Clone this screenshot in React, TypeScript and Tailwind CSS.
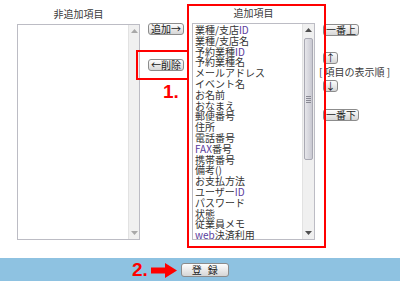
const items = [
  "業種/支店ID",
  "業種/支店名",
  "予約業種ID",
  "予約業種名",
  "メールアドレス",
  "イベント名",
  "お名前",
  "おなまえ",
  "郵便番号",
  "住所",
  "電話番号",
  "FAX番号",
  "携帯番号",
  "備考()",
  "お支払方法",
  "ユーザーID",
  "パスワード",
  "状態",
  "従業員メモ",
  "web決済利用",
];

// latin letters show up purple-ish in the original listbox
function Item({ label }: { label: string }) {
  const parts = label.split(/([A-Za-z]+)/);
  return (
    <div className="h-[10.8px] leading-[10.8px] whitespace-nowrap">
      {parts.map((p, i) =>
        /^[A-Za-z]+$/.test(p) ? (
          <span key={i} className="text-[#5a3c9c]">
            {p}
          </span>
        ) : (
          <span key={i}>{p}</span>
        )
      )}
    </div>
  );
}

function Btn({ children, className = "" }: { children: React.ReactNode; className?: string }) {
  return (
    <button
      className={`flex items-center justify-center rounded-[3px] border border-[#8c8c8c] bg-linear-to-b from-[#fefefe] to-[#d6d6d6] text-[10px] leading-none text-[#222] ${className}`}
    >
      {children}
    </button>
  );
}

function Arrow({ up, dim }: { up?: boolean; dim?: boolean }) {
  return (
    <svg width="7" height="4" viewBox="0 0 7 4">
      <path d={up ? "M0 4 L3.5 0 L7 4 Z" : "M0 0 L3.5 4 L7 0 Z"} fill={dim ? "#a8a8a8" : "#505050"} />
    </svg>
  );
}

export default function App() {
  return (
    <div className="w-[400px] h-[281px] bg-white font-['Noto_Sans_CJK_JP','Noto_Sans',sans-serif] text-[#3a3a3a] overflow-hidden">
      <section className="relative flex h-[258px] pl-[17px]">
        <div className="flex w-[123px] flex-col">
          <p className="h-[24px] pt-[8px] text-center text-[10px] leading-[12px]">非追加項目</p>
          <div className="flex h-[216px] border border-[#bcbcc4]">
            <div className="flex-1 bg-white" />
            <div className="flex w-[11px] flex-col items-center justify-between border-l border-[#e2e2e2] bg-[#f0f0f0] py-[4px]">
              <Arrow up dim />
              <Arrow dim />
            </div>
          </div>
        </div>

        <div className="ml-[8px] flex w-[36px] flex-col gap-[24px] pt-[23px]">
          <Btn className="h-[12px] w-[36px]">追加→</Btn>
          <Btn className="h-[12px] w-[36px]">←削除</Btn>
        </div>

        <div className="ml-[8px] flex w-[123px] flex-col">
          <p className="h-[23px] pt-[7px] text-center text-[10px] leading-[12px]">追加項目</p>
          <div className="flex h-[217px] border border-[#bcbcc4]">
            <div className="flex-1 pl-[2px] pt-[1px] text-[10px] text-[#333]">
              {items.map((it) => (
                <Item key={it} label={it} />
              ))}
            </div>
            <div className="flex w-[12px] flex-col border-l border-[#e2e2e2] bg-[#f0f0f0]">
              <div className="flex h-[12px] items-center justify-center">
                <Arrow up />
              </div>
              <div className="flex-1 px-[1px] pt-[2px]">
                <div className="flex h-[122px] items-center justify-center rounded-[2px] border border-[#a9a9b3] bg-linear-to-r from-[#e6e6ea] to-[#c9c9d2]">
                  <div className="flex flex-col gap-[1px]">
                    <span className="block h-px w-[5px] bg-[#8a8a94]" />
                    <span className="block h-px w-[5px] bg-[#8a8a94]" />
                    <span className="block h-px w-[5px] bg-[#8a8a94]" />
                    <span className="block h-px w-[5px] bg-[#8a8a94]" />
                  </div>
                </div>
              </div>
              <div className="flex h-[12px] items-center justify-center">
                <Arrow />
              </div>
            </div>
          </div>
        </div>

        <div className="ml-[8px] flex flex-col items-start pt-[24px]">
          <Btn className="h-[12px] w-[36px]">一番上</Btn>
          <Btn className="mt-[16px] h-[12px] w-[15px]">↑</Btn>
          <p className="-ml-[4px] h-[16px] whitespace-nowrap text-[10px] leading-[16px]">[ 項目の表示順 ]</p>
          <Btn className="h-[12px] w-[15px]">↓</Btn>
          <Btn className="mt-[17px] h-[12px] w-[36px]">一番下</Btn>
        </div>

        <svg className="pointer-events-none absolute left-0 top-0" width="400" height="257">
          <rect x="188" y="5" width="137" height="242" fill="none" stroke="#ff0000" strokeWidth="2" />
          <path d="M188 51 H137 V79 H188" fill="none" stroke="#ff0000" strokeWidth="2" />
        </svg>
        <span className="absolute left-[163px] top-[82px] font-['Liberation_Sans',sans-serif] text-[19px] font-bold leading-[20px] text-[#ff0000]">
          1.
        </span>
      </section>

      <footer className="flex h-[23px] items-center bg-[#8ec2e1] pl-[132px] pt-[1px]">
        <span className="font-['Liberation_Sans',sans-serif] text-[19px] font-bold leading-[18px] text-[#ff0000]">2.</span>
        <svg className="ml-[3px]" width="26" height="15" viewBox="0 0 26 15">
          <path d="M0 4.5 H14 V0 L26 7.5 L14 15 V10.5 H0 Z" fill="#ff0000" />
        </svg>
        <Btn className="ml-[4px] h-[14px] w-[48px] tracking-[6px] pl-[6px]">登録</Btn>
      </footer>
    </div>
  );
}
